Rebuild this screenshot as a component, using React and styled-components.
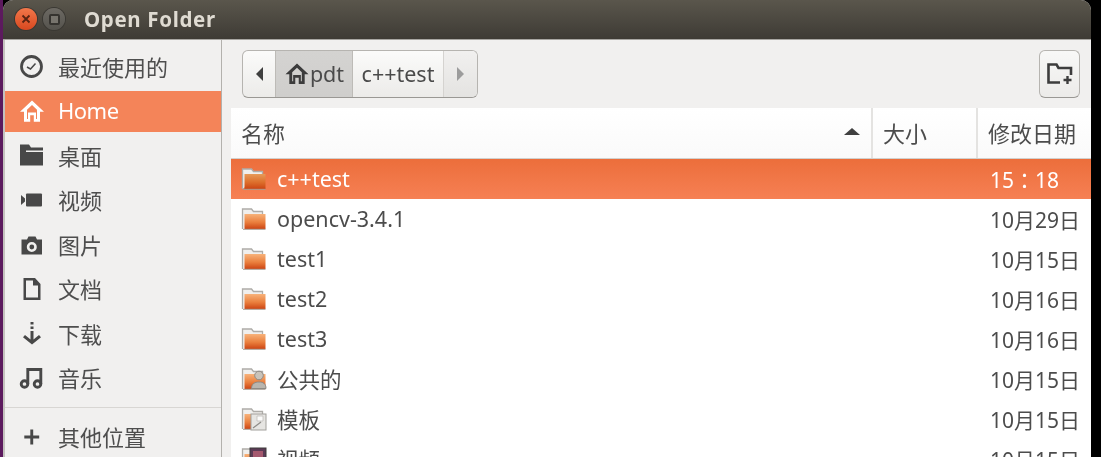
import React from "react";
import styled, { createGlobalStyle } from "styled-components";

const GlobalStyle = createGlobalStyle`
  html, body {
    margin: 0;
    padding: 0;
    width: 1101px;
    height: 457px;
    overflow: hidden;
    background: #000;
  }
  * {
    box-sizing: border-box;
  }
`;

const font = `"Noto Sans", "Noto Sans CJK SC", sans-serif`;

const places = [
  { label: "最近使用的", icon: "clock" },
  { label: "Home", icon: "home", active: true },
  { label: "桌面", icon: "desktop" },
  { label: "视频", icon: "video" },
  { label: "图片", icon: "camera" },
  { label: "文档", icon: "doc" },
  { label: "下载", icon: "download" },
  { label: "音乐", icon: "music" },
];

const files = [
  { name: "c++test", date: "15：18", selected: true },
  { name: "opencv-3.4.1", date: "10月29日" },
  { name: "test1", date: "10月15日" },
  { name: "test2", date: "10月16日" },
  { name: "test3", date: "10月16日" },
  { name: "公共的", date: "10月15日", badge: "person" },
  { name: "模板", date: "10月15日", badge: "template" },
  { name: "视频", date: "10月15日", badge: "film" },
];

const HOME_PATH =
  "M13 2.500L1 13.800h4v10h6.200v-6.500h3.600v6.500H21v-10h4zM8 21v-9.200l5-4.700 5 4.700V21h-1v-6.500H9V21z";

function PlaceIcon({ name, color = "#484848" }) {
  return (
    <svg width="26" height="26" viewBox="0 0 26 26" fill={color}>
      {name === "clock" && (
        <g fill="none" stroke={color}>
          <circle cx="12.500" cy="12.500" r="10" strokeWidth="2.800" />
          <path d="M8 13l3.500 2 5-5.500" strokeWidth="1.500" />
        </g>
      )}
      {name === "home" && <path d={HOME_PATH} fillRule="evenodd" />}
      {name === "desktop" && <path d="M1 1.500h9l2 3h12v3H7V9h17v13.500H1z" />}
      {name === "video" && (
        <g>
          <path d="M2 8l4 3.500v3L2 18z" />
          <rect x="7" y="6.500" width="16" height="13" rx="1" />
        </g>
      )}
      {name === "camera" && (
        <path
          d="M2.500 7.500H8l1.500-3h7l1.500 3h5v15h-20.500zM12.800 10a5 5 0 1 0 0 10 5 5 0 0 0 0-10zm0 2.600a2.400 2.400 0 1 1 0 4.800 2.400 2.400 0 0 1 0-4.800z"
          fillRule="evenodd"
        />
      )}
      {name === "doc" && (
        <path d="M4.500 2h11.500l5.500 6v16h-17zm2.500 2.500v17h12V9.500h-5v-5z" fillRule="evenodd" />
      )}
      {name === "download" && (
        <path d="M11.500 1h3v2.500h-3zm0 4.500h3V8h-3zm0 4.500h3v8.500l5.500-4.500 2 2.300-9 7.200-9-7.200 2-2.300 5.500 4.500z" />
      )}
      {name === "music" && (
        <g fill="none" stroke={color} strokeWidth="2.900">
          <circle cx="5.500" cy="19" r="3.300" />
          <circle cx="18.500" cy="19" r="3.300" />
          <path d="M8.800 19V4.500h13V19" />
        </g>
      )}
    </svg>
  );
}

function FolderIcon({ badge, selected }) {
  const id = selected ? "folder-sel" : "folder";
  return (
    <svg width="26" height="24" viewBox="0 0 26 24">
      <defs>
        <linearGradient id={id} x1="0" y1="0" x2="0" y2="1">
          <stop offset="0" stopColor={selected ? "#e79a58" : "#f7b27a"} />
          <stop offset="0.55" stopColor={selected ? "#dd6f2c" : "#ea7f3d"} />
          <stop offset="1" stopColor="#cc4413" />
        </linearGradient>
      </defs>
      <path d="M1.500 22V2h9l2 2.500h9V7" fill="#f0efed" stroke="#aeaca8" strokeWidth="1.300" />
      <rect x="3.500" y="7" width="21" height="15" fill={`url(#${id})`} />
      <path d="M2 22.300h22.500" stroke="#a59c92" strokeWidth="1" />
      {badge === "person" && (
        <g>
          <circle cx="18" cy="8.500" r="4.300" fill="#c9c3ba" stroke="#8e8a84" />
          <path d="M10.500 21.500c0-5 3.500-6.500 7.500-6.500s7 1.500 7 6.500z" fill="#b9b5ae" stroke="#8e8a84" />
        </g>
      )}
      {badge === "template" && (
        <g>
          <rect x="10" y="7" width="15" height="16" fill="#e6e5e2" stroke="#a2a09c" />
          <path d="M16 9h6v5h-6z" fill="#fbfbfa" stroke="#c0beba" strokeWidth="0.800" />
          <path d="M12 21l8-6" stroke="#8f8d89" strokeWidth="1.300" />
        </g>
      )}
      {badge === "film" && (
        <g>
          <rect x="9" y="1" width="16" height="22" fill="#5b3a55" stroke="#3c3a3a" />
          <rect x="12" y="4" width="10" height="16" fill="#a5596f" />
        </g>
      )}
    </svg>
  );
}

export default function App() {
  return (
    <Screen>
      <GlobalStyle />
      <DesktopEdge />
      <Window>
        <TitleBar>
          <CloseButton>
            <svg width="10" height="10" viewBox="0 0 10 10">
              <path d="M1.500 1.500l7 7m0-7l-7 7" stroke="#5a2412" strokeWidth="1.800" />
            </svg>
          </CloseButton>
          <MaxButton>
            <MaxGlyph />
          </MaxButton>
          <Title>Open Folder</Title>
        </TitleBar>

        <Body>
          <Sidebar>
            {places.map((p) => (
              <Place key={p.label} $active={p.active}>
                <PlaceIcon name={p.icon} color={p.active ? "#fff" : "#484848"} />
                <PlaceLabel>{p.label}</PlaceLabel>
              </Place>
            ))}
            <Divider />
            <Place>
              <svg width="26" height="26" viewBox="0 0 26 26" fill="#484848">
                <path d="M11.300 5.500h2.900v6h6v2.900h-6v6h-2.900v-6h-6v-2.900h6z" />
              </svg>
              <PlaceLabel>其他位置</PlaceLabel>
            </Place>
          </Sidebar>

          <Main>
            <Toolbar>
              <PathBar>
                <ArrowSegment>
                  <svg width="9" height="16" viewBox="0 0 9 16">
                    <path d="M8 1v14L1 8z" fill="#3f3f3f" />
                  </svg>
                </ArrowSegment>
                <PathButton $current>
                  <svg width="26" height="25" viewBox="0 0 26 26" fill="#3c3c3c">
                    <path d={HOME_PATH} fillRule="evenodd" />
                  </svg>
                  pdt
                </PathButton>
                <PathButton>c++test</PathButton>
                <ArrowSegment $end>
                  <svg width="9" height="16" viewBox="0 0 9 16">
                    <path d="M1 1v14l7-7z" fill="#9c9c9c" />
                  </svg>
                </ArrowSegment>
              </PathBar>
              <NewFolderButton>
                <svg width="28" height="24" viewBox="0 0 28 24" fill="none" stroke="#3d3d3d" strokeWidth="2.600">
                  <path d="M14 20.500H2.500V2.500h8l2 3.500h12.500v7" />
                  <path d="M21.500 14v8M17.500 18h8" strokeWidth="2.400" />
                </svg>
              </NewFolderButton>
            </Toolbar>

            <FileList>
              <HeaderRow>
                <NameHeader>
                  名称
                  <SortArrow />
                </NameHeader>
                <SizeHeader>大小</SizeHeader>
                <DateHeader>修改日期</DateHeader>
              </HeaderRow>
              {files.map((f) => (
                <FileRow key={f.name} $selected={f.selected}>
                  <FolderIcon badge={f.badge} selected={f.selected} />
                  <FileName>{f.name}</FileName>
                  <FileDate $time={f.selected}>{f.date}</FileDate>
                </FileRow>
              ))}
            </FileList>
          </Main>
        </Body>
      </Window>
    </Screen>
  );
}

const Screen = styled.div`
  display: flex;
  width: 1101px;
  height: 457px;
  background: #000;
  overflow: hidden;
  font-family: ${font};
  color: #4c4c4c;
  filter: blur(0.3px);
`;

const DesktopEdge = styled.div`
  width: 3px;
  background: #5c1a5e;
  flex: none;
`;

const Window = styled.div`
  width: 1088px;
  flex: none;
  display: flex;
  flex-direction: column;
  border-radius: 10px 10px 0 0;
  overflow: hidden;
  background: #f1f0ef;
`;

const TitleBar = styled.div`
  height: 40px;
  flex: none;
  display: flex;
  align-items: center;
  padding: 0 0 1px 12px;
  background: linear-gradient(#5a564c, #3e3b35);
  border-bottom: 1px solid #a8a6a2;
`;

const CloseButton = styled.div`
  width: 22px;
  height: 22px;
  border-radius: 50%;
  display: flex;
  align-items: center;
  justify-content: center;
  background: linear-gradient(#f2774a, #d8481f);
  box-shadow: 0 0 0 1px #3a3833;
`;

const MaxButton = styled.div`
  width: 22px;
  height: 22px;
  margin-left: 6px;
  border-radius: 50%;
  display: flex;
  align-items: center;
  justify-content: center;
  background: linear-gradient(#6c6963, #55534d);
  box-shadow: 0 0 0 1px #3a3833;
`;

const MaxGlyph = styled.div`
  width: 11px;
  height: 11px;
  border: 2px solid #35332f;
  border-radius: 2px;
  background: #77746d;
`;

const Title = styled.div`
  margin-left: 19px;
  color: #dfdbd2;
  font-size: 20.500px;
  font-weight: 700;
  letter-spacing: 0.650px;
`;

const Body = styled.div`
  flex: 1;
  min-height: 0;
  display: flex;
`;

const Sidebar = styled.div`
  width: 219px;
  flex: none;
  display: flex;
  flex-direction: column;
  gap: 3.500px;
  padding: 6px 0 0;
  background: #f1f0ef;
  border-left: 2px solid #c4c2be;
  border-right: 1px solid #b3b1ad;
  overflow: hidden;
`;

const Place = styled.div`
  height: 41px;
  flex: none;
  display: flex;
  align-items: center;
  gap: 13px;
  padding-left: 14px;
  font-size: 22px;
  letter-spacing: ${(p) => (p.$active ? "-0.500px" : "0")};
  color: ${(p) => (p.$active ? "#fff" : "#4e4e4e")};
  background: ${(p) => (p.$active ? "#f48459" : "transparent")};
`;

const PlaceLabel = styled.span`
  padding-bottom: 2px;
`;

const Divider = styled.div`
  height: 1px;
  flex: none;
  margin: 5px 0 5px;
  background: #d8d6d3;
`;

const Main = styled.div`
  flex: 1;
  min-width: 0;
  display: flex;
  flex-direction: column;
  padding-left: 9px;
  background: #f1f0ef;
`;

const Toolbar = styled.div`
  height: 68px;
  flex: none;
  display: flex;
  justify-content: space-between;
  align-items: flex-start;
  padding: 10px 11px 0 11px;
`;

const PathBar = styled.div`
  display: flex;
  height: 48px;
  border: 1px solid #b6b4b0;
  border-bottom-color: #9a9894;
  border-radius: 6px;
  overflow: hidden;
  background: linear-gradient(#fbfbfa, #ecebe9);
`;

const ArrowSegment = styled.div`
  width: ${(p) => (p.$end ? "34px" : "32px")};
  display: flex;
  align-items: center;
  justify-content: center;
  background: ${(p) => (p.$end ? "linear-gradient(#f1f0ef, #e4e3e1)" : "transparent")};
  border-left: ${(p) => (p.$end ? "1px solid #d5d3d0" : "none")};
`;

const PathButton = styled.div`
  display: flex;
  align-items: center;
  justify-content: center;
  width: ${(p) => (p.$current ? "77px" : "91px")};
  font-size: 21.500px;
  padding-bottom: 1px;
  color: #4a4a4a;
  border-left: 1px solid #bdbbb7;
  background: ${(p) => (p.$current ? "linear-gradient(#d4d3d1, #cfcecc)" : "transparent")};
`;

const NewFolderButton = styled.div`
  width: 41px;
  height: 48px;
  display: flex;
  align-items: center;
  justify-content: center;
  border: 1px solid #b6b4b0;
  border-bottom-color: #9a9894;
  border-radius: 6px;
  background: linear-gradient(#f8f8f7, #ecebe9);
`;

const FileList = styled.div`
  flex: 1;
  min-height: 0;
  background: #fff;
  overflow: hidden;
`;

const HeaderRow = styled.div`
  height: 51px;
  display: grid;
  grid-template-columns: 642px 105px 1fr;
  background: linear-gradient(#fff, #fafafa);
  border-bottom: 1px solid #d2d0cd;
  font-size: 22px;
`;

const HeaderCell = styled.div`
  display: flex;
  align-items: center;
  padding: 0 0 2px 10px;
  border-right: 2px solid #e4e3e1;
`;

const NameHeader = styled(HeaderCell)`
  position: relative;
`;

const SizeHeader = styled(HeaderCell)``;

const DateHeader = styled(HeaderCell)`
  border-right: none;
`;

const SortArrow = styled.div`
  position: absolute;
  right: 11px;
  top: 20px;
  width: 0;
  height: 0;
  border-left: 8px solid transparent;
  border-right: 8px solid transparent;
  border-bottom: 7px solid #404040;
`;

const FileRow = styled.div`
  height: 40px;
  display: flex;
  align-items: center;
  padding-left: 10px;
  color: ${(p) => (p.$selected ? "#fff" : "#4c4c4c")};
  background: ${(p) => (p.$selected ? "linear-gradient(#ec6e3b, #f68054)" : "transparent")};
  font-size: 21.500px;
`;

const FileName = styled.div`
  margin-left: 10px;
  padding-bottom: 1px;
  flex: 1;
`;

const FileDate = styled.div`
  width: 101px;
  flex: none;
  font-size: 21px;
  padding-bottom: 1px;
  font-family: ${(p) => (p.$time ? `"Noto Sans", "Noto Sans CJK TC", sans-serif` : "inherit")};
`;
